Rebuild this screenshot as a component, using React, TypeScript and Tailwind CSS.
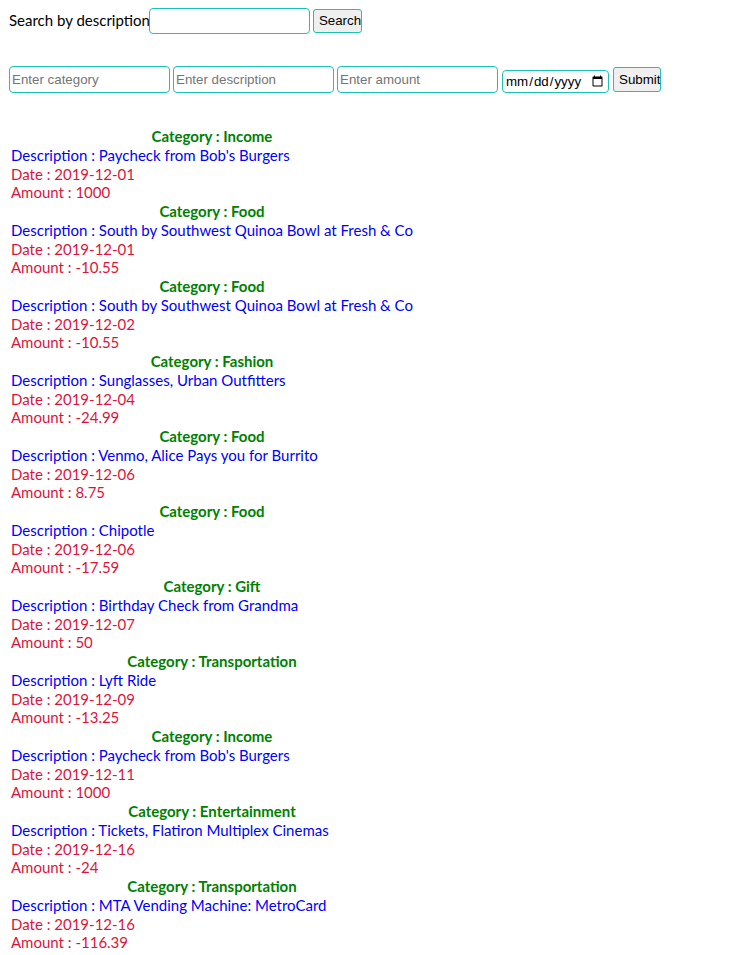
const transactions = [
  { category: "Income", description: "Paycheck from Bob's Burgers", date: "2019-12-01", amount: "1000" },
  { category: "Food", description: "South by Southwest Quinoa Bowl at Fresh & Co", date: "2019-12-01", amount: "-10.55" },
  { category: "Food", description: "South by Southwest Quinoa Bowl at Fresh & Co", date: "2019-12-02", amount: "-10.55" },
  { category: "Fashion", description: "Sunglasses, Urban Outfitters", date: "2019-12-04", amount: "-24.99" },
  { category: "Food", description: "Venmo, Alice Pays you for Burrito", date: "2019-12-06", amount: "8.75" },
  { category: "Food", description: "Chipotle", date: "2019-12-06", amount: "-17.59" },
  { category: "Gift", description: "Birthday Check from Grandma", date: "2019-12-07", amount: "50" },
  { category: "Transportation", description: "Lyft Ride", date: "2019-12-09", amount: "-13.25" },
  { category: "Income", description: "Paycheck from Bob's Burgers", date: "2019-12-11", amount: "1000" },
  { category: "Entertainment", description: "Tickets, Flatiron Multiplex Cinemas", date: "2019-12-16", amount: "-24" },
  { category: "Transportation", description: "MTA Vending Machine: MetroCard", date: "2019-12-16", amount: "-116.39" },
];

const inputCls =
  "border border-[#1cc2b2] rounded-[4px] px-[2px] text-[13.33px] outline-none placeholder:text-[#757575] bg-white";
const btnCls =
  "border border-[#1cc2b2] rounded-[3px] bg-[#efefef] text-[13.33px] px-[5px] text-black";

export default function App() {
  return (
    <div className="font-['Lato','Noto_Sans',sans-serif] text-[15px] text-black bg-white min-h-screen">
      <div className="flex items-center pl-[9px] pt-[8px]">
        <span className="leading-[18px] -mt-[2px] mr-[-1px]">Search by description</span>
        <input type="text" className={`${inputCls} w-[161px] h-[26px]`} />
        <button className={`${btnCls} ml-[3px] h-[24px] w-[49px] font-['Liberation_Sans',Arial,sans-serif]`}>
          Search
        </button>
      </div>

      <form className="flex items-end gap-[3px] pl-[9px] mt-[32px] font-['Liberation_Sans',Arial,sans-serif]">
        <input type="text" placeholder="Enter category" className={`${inputCls} w-[161px] h-[27px]`} />
        <input type="text" placeholder="Enter description" className={`${inputCls} w-[161px] h-[27px]`} />
        <input type="text" placeholder="Enter amount" className={`${inputCls} w-[161px] h-[27px]`} />
        <input type="date" className={`${inputCls} ml-[1px] w-[107px] h-[23px]`} />
        <button type="button" className={`${btnCls} ml-[1px] mb-[1px] h-[25px] w-[48px]`}>
          Submit
        </button>
      </form>

      <div className="w-fit ml-[11px] mt-[34px] leading-[18.75px]">
        {transactions.map((t, i) => (
          <div key={i}>
            <div className="text-center font-bold text-[#008000]">Category : {t.category}</div>
            <div className="text-[#0000ff]">Description : {t.description}</div>
            <div className="text-[#dc143c]">Date : {t.date}</div>
            <div className="text-[#dc143c]">Amount : {t.amount}</div>
          </div>
        ))}
      </div>
    </div>
  );
}
